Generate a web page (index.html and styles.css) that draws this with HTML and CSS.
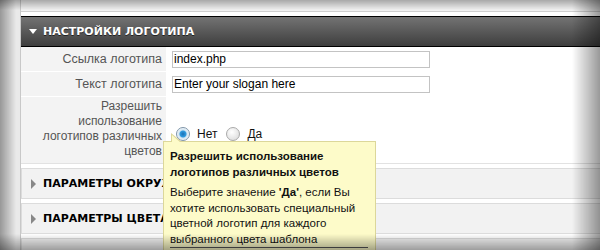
FILE: index.html
```html
<!DOCTYPE html>
<html lang="ru">
<head>
    <meta charset="UTF-8">
    <title>Настройки логотипа</title>
    <link rel="stylesheet" href="styles.css">
</head>
<body>
    <div class="wrap">
        <div class="prev"></div>
        <div class="header"><span class="tri-down"></span>НАСТРОЙКИ ЛОГОТИПА</div>
        <div class="rows">
            <div class="label">Ссылка логотипа</div>
            <div class="field"><div class="input">index.php</div></div>
            <div class="label">Текст логотипа</div>
            <div class="field"><div class="input">Enter your slogan here</div></div>
            <div class="label tall">Разрешить<br>использование<br>логотипов различных<br>цветов</div>
            <div class="field radios">
                <span class="radio on"></span><span class="rtext">Нет</span>
                <span class="radio"></span><span class="rtext">Да</span>
                <div class="tip">
                    <div class="tip-title">Разрешить использование<br>логотипов различных цветов</div>
                    <div class="tip-body">Выберите значение <b>'Да'</b>, если Вы<br>хотите использовать специальный<br>цветной логотип для каждого<br>выбранного цвета шаблона</div>
                    <div class="tip-line"></div>
                </div>
            </div>
        </div>
        <div class="section"><span class="tri-right"></span>ПАРАМЕТРЫ ОКРУЖЕНИЯ</div>
        <div class="section"><span class="tri-right"></span>ПАРАМЕТРЫ ЦВЕТА</div>
        <div class="section"></div>
    </div>
    <div class="vignette"></div>
</body>
</html>
```

FILE: styles.css
```css
body { margin: 0; background: #e9e9e9; font-family: "Liberation Sans", Arial, sans-serif; overflow: hidden; height: 250px; }
.wrap { margin-left: 20px; border-left: 1px solid #c8c8c8; background: #fff; height: 250px; }
.prev { height: 11px; background: #f1f1f1; border-bottom: 1px solid #cfcfcf; }
.header { margin-top: 4px; height: 29px; border-top: 1px solid #000; border-bottom: 1px solid #000; background: linear-gradient(#737373, #3e3e3e); color: #fff; font-family: "DejaVu Sans", Verdana, sans-serif; font-weight: bold; font-size: 11px; padding-left: 8px; display: flex; align-items: center; text-shadow: 0 1px 0 #222; }
.tri-down { width: 0; height: 0; border-left: 4px solid transparent; border-right: 4px solid transparent; border-top: 5px solid #fff; margin-right: 6px; }
.rows { display: grid; grid-template-columns: 145px 1fr; }
.label { background: #f3f3f3; color: #555; font-size: 12.5px; text-align: right; padding: 0 4px 0 0; height: 24px; line-height: 24px; border-bottom: 1px solid #fff; }
.label.tall { height: 64px; line-height: 15px; padding-top: 2px; font-size: 12px; border-bottom: 1px solid #e2e2e2; }
.field { padding-left: 6px; display: flex; align-items: center; border-bottom: 1px solid #fff; }
.input { width: 254px; height: 15px; border: 1px solid #c3c3c3; font-size: 12px; line-height: 15px; padding: 0 1px; color: #000; }
.radios { position: relative; border-bottom: 1px solid #e2e2e2; padding-left: 10px; padding-top: 8px; }
.radio { width: 12px; height: 12px; border-radius: 50%; border: 1px solid #a9a9a9; background: radial-gradient(circle at 40% 35%, #fff, #d6d6d6); }
.radio.on { background: radial-gradient(circle, #1b6fb3 0, #2f9be0 3px, #cfe3f1 4px, #fff 7px); border-color: #7e95a8; }
.rtext { font-size: 12px; margin: 0 9px 0 7px; color: #111; }
.tip { position: absolute; left: -3px; top: 44px; width: 200px; padding: 7px 5px 0 6px; height: 120px; background: #fdfbc9; border: 1px solid #dcd79a; z-index: 2; font-size: 11.5px; line-height: 15.5px; color: #111; white-space: nowrap; }
.tip::before { content: ""; position: absolute; left: 7px; top: -9px; width: 0; height: 0; border-right: 11px solid transparent; border-bottom: 9px solid #dcd79a; }
.tip::after { content: ""; position: absolute; left: 8px; top: -7px; width: 0; height: 0; border-right: 9px solid transparent; border-bottom: 8px solid #fdfbc9; }
.tip-title { font-weight: bold; margin-bottom: 5px; }
.tip-line { border-top: 1px solid #555; margin-top: 0; width: 198px; }
.section { margin-top: 4px; height: 29px; background: #f2f2f2; border: 1px solid #dcdcdc; border-right: none; display: flex; align-items: center; padding-left: 9px; font-family: "DejaVu Sans", Verdana, sans-serif; font-weight: bold; font-size: 11px; color: #000; }
.section:first-of-type { margin-top: 3px; }
.tri-right { width: 0; height: 0; border-top: 5px solid transparent; border-bottom: 5px solid transparent; border-left: 5px solid #888; margin-right: 7px; }
.vignette { position: fixed; inset: 0; pointer-events: none; z-index: 5; background: linear-gradient(to right, rgba(0,0,0,.35), rgba(0,0,0,0) 16px), linear-gradient(to left, rgba(0,0,0,.4), rgba(0,0,0,0) 28px), linear-gradient(to top, rgba(0,0,0,.35), rgba(0,0,0,0) 16px), linear-gradient(to bottom, rgba(0,0,0,.3), rgba(0,0,0,0) 10px); }
```
